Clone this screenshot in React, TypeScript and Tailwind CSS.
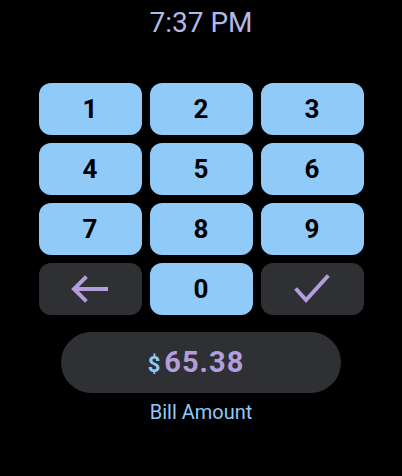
import React from "react";

const digits = ["1", "2", "3", "4", "5", "6", "7", "8", "9"];

function BackIcon() {
  return (
    <svg width="38" height="28" viewBox="0 0 38 28" fill="none">
      <path d="M3 14 H37" stroke="#b39ddb" strokeWidth="4" strokeLinecap="butt" />
      <path d="M14 3 L3 14 L14 25" stroke="#b39ddb" strokeWidth="4" strokeLinecap="square" strokeLinejoin="miter" />
    </svg>
  );
}

function CheckIcon() {
  return (
    <svg width="36" height="30" viewBox="0 0 36 30" fill="none">
      <path d="M3 16 L12 26 L33 3" stroke="#b39ddb" strokeWidth="4" strokeLinecap="square" strokeLinejoin="miter" />
    </svg>
  );
}

function Key({ children, dark }: { children: React.ReactNode; dark?: boolean }) {
  return (
    <button
      className={
        dark
          ? "h-[52px] rounded-[12px] bg-[#2f3033] flex items-center justify-center"
          : "h-[52px] rounded-[12px] bg-[#90caf9] flex items-center justify-center text-[26px] font-bold text-black"
      }
    >
      {children}
    </button>
  );
}

export default function App() {
  return (
    <div
      className="w-[402px] h-[476px] bg-black flex flex-col items-center"
      style={{ fontFamily: "Roboto, 'Liberation Sans', sans-serif" }}
    >
      <div className="pt-[6px] text-[28px] leading-[34px] text-[#b4b8e6]">7:37 PM</div>

      <div className="mt-[43px] grid grid-cols-[repeat(3,103px)] gap-[8px]">
        {digits.map((d) => (
          <Key key={d}>{d}</Key>
        ))}
        <Key dark>
          <BackIcon />
        </Key>
        <Key>0</Key>
        <Key dark>
          <CheckIcon />
        </Key>
      </div>

      <div className="mt-[17px] w-[280px] h-[61px] rounded-full bg-[#2f3033] flex items-center justify-center pr-[10px]">
        <div className="flex items-baseline gap-[4px]">
          <span className="text-[22px] font-bold text-[#90caf9]">$</span>
          <span className="text-[29px] font-bold tracking-[1px] text-[#b39ddb]">65.38</span>
        </div>
      </div>

      <div className="mt-[7px] text-[20px] leading-[24px] text-[#90caf9]">Bill Amount</div>
    </div>
  );
}
